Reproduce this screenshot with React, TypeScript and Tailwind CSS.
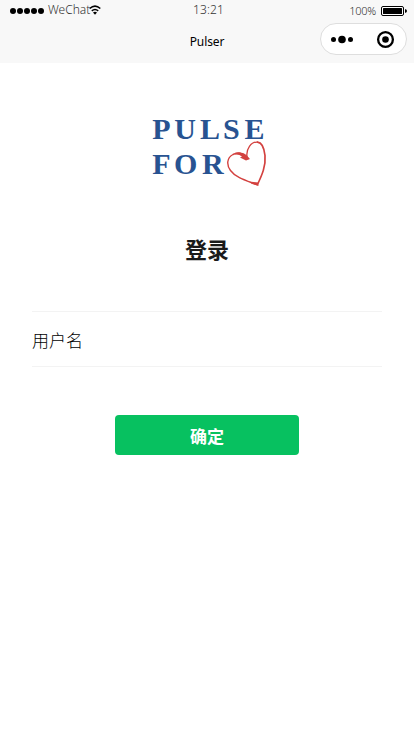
function Logo() {
  return (
    <svg width="120" height="80" viewBox="147 112 120 80" role="img" aria-label="Pulse for heart">
      <g fill="#285391" fontFamily="'Liberation Serif', serif" fontWeight="700" fontSize="30">
        <text x="152.3 174.3 200 223 244.500" y="139">PULSE</text>
        <text x="152.3 174 202" y="173.500">FOR</text>
      </g>
      <g fill="none" stroke="#d3413f" strokeLinecap="round" strokeLinejoin="round">
        <path strokeWidth="1.400" d="M248.500 158.500C246 154.500 239 151.500 233 154.500C226.500 158 226.500 165 230.500 170.500C236 178 246 180.500 256.500 184.500" />
        <path strokeWidth="1.700" d="M257.500 184.500C262 175 266 166 265 155.500C264 147 261.500 142.500 257.500 142.200" />
        <path strokeWidth="1.300" d="M257.500 142.200C251 141.500 246 149 247 156.500" />
      </g>
      <g fill="#d3413f">
        <path d="M235 153C240 151 246 154 247.500 156.500L250 159L246 160.500L240 157.500L242 156.500Q239 154 235 154.500Z" />
        <path d="M249 181.500L258 182.500L258.500 186L251.500 183.800Z" />
      </g>
    </svg>
  );
}

function StatusBar() {
  return (
    <div className="grid h-5 grid-cols-3 items-center pl-[10px] pr-[7px] text-[12px] leading-5 text-[#333]">
      <div className="flex items-center">
        <svg width="35" height="6" viewBox="0 0 35 6" className="mt-px">
          {[3, 10, 17, 24, 31].map((x) => <circle key={x} cx={x} cy="3" r="3" fill="#000" />)}
        </svg>
        <span className="ml-[3px] w-[41px] whitespace-nowrap font-light">WeChat</span>
        <svg width="12" height="10" viewBox="0 0 12 10" fill="none" stroke="#000">
          <path d="M.7 3.500Q6-1.200 11.300 3.500" strokeWidth="1.600" />
          <path d="M2.800 5.900Q6 3.100 9.200 5.900" strokeWidth="1.500" />
          <path d="M4 7.500Q6 6.200 8 7.500L6 9.700Z" fill="#000" stroke="none" />
        </svg>
      </div>
      <span className="-mt-px text-center font-light tracking-[0.1px]">13:21</span>
      <div className="flex items-center justify-end">
        <span className="mr-[5px] pt-[2px] text-[11px] font-light leading-[18px] tracking-[-0.25px]">100%</span>
        <svg width="26" height="10" viewBox="0 0 26 10" className="mt-px">
          <rect x=".5" y=".5" width="22" height="9" rx="1.500" fill="#fff" stroke="#000" />
          <rect x="2" y="2" width="19" height="6" rx=".5" fill="#000" />
          <path d="M24 3Q26 3.500 26 5T24 7Z" fill="#000" />
        </svg>
      </div>
    </div>
  );
}

export default function App() {
  return (
    <div className="flex h-[734px] w-[414px] flex-col bg-white font-['Noto_Sans','Noto_Sans_CJK_SC',sans-serif]">
      <header className="h-[63px] bg-[#f8f8f8]">
        <StatusBar />
        <div className="grid grid-cols-[1fr_auto_1fr] items-center px-[7px] pt-[3px]">
          <span />
          <h1 className="mt-[5px] text-[12px] leading-[18px] tracking-[-0.1px] text-black">Pulser</h1>
          <div className="flex h-8 w-[87px] items-center justify-self-end rounded-full border border-[#dedede] bg-white">
            <svg width="85" height="30" viewBox="0 0 85 30">
              <circle cx="12.500" cy="15.500" r="2.500" />
              <circle cx="21" cy="15.500" r="3.800" />
              <circle cx="29.500" cy="15.500" r="2.500" />
              <circle cx="64.500" cy="15.500" r="7.400" fill="none" stroke="#000" strokeWidth="2.300" />
              <circle cx="64.500" cy="15.500" r="3.300" />
            </svg>
          </div>
        </div>
      </header>
      <main className="flex flex-col px-8">
        <div className="mt-[49px] flex pl-[115px]"><Logo /></div>
        <h2 className="mt-[41px] text-center text-[22px] font-bold leading-8 text-[#1a1a1a]">登录</h2>
        <label className="mt-[46px] flex h-14 items-center border-y border-[#f3f3f3] text-[17px] text-black">
          <span className="mt-0.5 font-['Noto_Sans_CJK_SC',sans-serif] font-light">用户名</span>
        </label>
        <button className="mt-12 h-10 w-[184px] self-center rounded-[4px] bg-[#07c160] pt-[3px] text-[17px] font-bold leading-[37px] text-white">确定</button>
      </main>
    </div>
  );
}
